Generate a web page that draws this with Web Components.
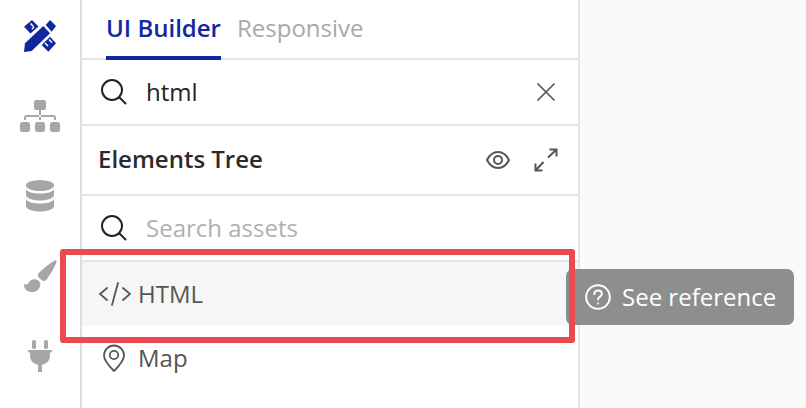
<!DOCTYPE html>
<html>
<head>
<meta charset="utf-8">
<style>
html,body{margin:0;height:100%;overflow:hidden}
body{font-family:"Open Sans",sans-serif;background:#fafafa}
</style>
</head>
<body>
<builder-app>
  <icon-rail slot="rail"></icon-rail>
  <tab-bar slot="panel"></tab-bar>
  <search-row slot="panel" value="html" clearable></search-row>
  <tree-header slot="panel">Elements Tree</tree-header>
  <search-row slot="panel" placeholder="Search assets"></search-row>
  <asset-item slot="panel" icon="code" active>HTML</asset-item>
  <asset-item slot="panel" icon="pin">Map</asset-item>
</builder-app>
<script>
class BuilderApp extends HTMLElement{
    constructor(){
        super()
        this.attachShadow({mode:"open"}).innerHTML = `
        <style>
            :host{display:flex;position:relative;width:806px;height:408px;overflow:hidden}
            .rail{width:80px;flex:none;background:#fff;border-right:2px solid #dedede}
            .panel{width:496px;flex:none;background:#fff;border-right:2px solid #e4e4e4}
            .tip{position:absolute;left:566px;top:269px;width:228px;height:56px;box-sizing:border-box;padding-left:19px;display:flex;align-items:center;gap:11px;background:#8e8e8e;border-radius:7px;color:#fff;font-size:24px;z-index:1}
            .tip span{margin-bottom:2px}
            .mark{position:absolute;left:60px;top:249px;width:515px;height:94px;box-sizing:border-box;border:6px solid #e9494f;border-radius:3px;z-index:2}
            svg{display:block}
        </style>
        <div class="rail"><slot name="rail"></slot></div>
        <div class="panel"><slot name="panel"></slot></div>
        <div class="tip">
            <svg width="26" height="26" viewBox="0 0 26 26" fill="none" stroke="#fff" stroke-width="2" stroke-linecap="round">
                <circle cx="13" cy="13" r="11.800"/>
                <path d="M9.300 10.200c0-2.200 1.700-3.600 3.800-3.600s3.700 1.400 3.700 3.300c0 2.900-3.800 2.900-3.800 5.600"/>
                <path d="M13 19.400v.2"/>
            </svg>
            <span>See reference</span>
        </div>
        <div class="mark"></div>
        `
    }
}

class IconRail extends HTMLElement{
    constructor(){
        super()
        this.attachShadow({mode:"open"}).innerHTML = `
        <style>
            :host{display:block;height:408px;position:relative}
            svg{position:absolute;display:block}
        </style>
        <svg style="left:23px;top:19px" width="34" height="34" viewBox="0 0 34 34">
            <g fill="#12279f">
                <!-- pencil -->
                <path d="M1 33l1-8.700L20.300 7l6.700 7.300L8.700 32z"/>
                <path d="M22.700 6l4.300-5 6 6-4.300 5.700z"/>
                <!-- ruler, two halves under the pencil -->
                <path d="M1 7.700L9 1l6.500 6.500-8 7z"/>
                <path d="M18.700 26L27 17.700l6 6.600-7.700 8.400z"/>
            </g>
            <g stroke="#fff" stroke-width="1.500" fill="none">
                <path d="M7.500 4.500l3 3M11 8l-2 2"/>
                <path d="M22 24l3 3M26 20.500l3 3"/>
            </g>
        </svg>
        <svg style="left:20px;top:100px" width="40" height="32" viewBox="0 0 40 32">
            <g fill="#a6a6a6">
                <rect x="14" y="0" width="12" height="10" rx="2"/>
                <rect x="0" y="22" width="10" height="10" rx="2.500"/>
                <rect x="15" y="22" width="10" height="10" rx="2.500"/>
                <rect x="30" y="22" width="10" height="10" rx="2.500"/>
            </g>
            <path d="M19 10v10h2V10zM4 20v-2a3 3 0 0 1 3-3h26a3 3 0 0 1 3 3v2h-2v-2a1 1 0 0 0-1-1H7a1 1 0 0 0-1 1v2z" fill="#a6a6a6"/>
        </svg>
        <svg style="left:26px;top:180px" width="28" height="32" viewBox="0 0 28 32">
            <g fill="#a6a6a6">
                <ellipse cx="14" cy="5.500" rx="14" ry="5.500"/>
                <path d="M0 9.200C2 12.500 8 13.500 14 13.500s12-1 14-4.300V15c0 3-6.300 5.500-14 5.500S0 18 0 15z"/>
                <path d="M0 19.200C2 22.500 8 23.500 14 23.500s12-1 14-4.300V26c0 3-6.300 5.500-14 5.500S0 29 0 26z"/>
            </g>
        </svg>
        <svg style="left:24px;top:260px" width="33" height="33" viewBox="0 0 33 33">
            <g fill="#a6a6a6">
                <path d="M31 .5c1.200-.5 2 .4 1.500 1.500-2 5.500-6 12-9.500 17-1.500 2-3.500 2.500-5 1.300l-3-2.500c-1.500-1.300-1.500-3.300 0-5C20 8 26 3 31 .5z"/>
                <path d="M8.500 19.500c3-.8 6 .5 7.500 3 1 2.500-.5 6-3 8-3.500 2.500-10 2-12-2-.8-1.500-1.200-3-.8-5 1 1.500 2.500 1.500 3.500.5 1.200-2 2.500-4 4.800-4.500z"/>
            </g>
        </svg>
        <svg style="left:28px;top:340px" width="24" height="32" viewBox="0 0 24 32">
            <g fill="#a6a6a6">
                <rect x="4" y="0" width="4" height="9" rx="1.800"/>
                <rect x="16" y="0" width="4" height="9" rx="1.800"/>
                <path d="M1 10h22a1 1 0 0 1 0 2.500h-1v3c0 5-3.500 8.500-8 9.300V32h-4v-7.200c-4.500-.8-8-4.300-8-9.300v-3H1a1 1 0 0 1 0-2.500z"/>
            </g>
        </svg>
        `
    }
}

class TabBar extends HTMLElement{
    constructor(){
        super()
        this.attachShadow({mode:"open"}).innerHTML = `
        <style>
            :host{display:flex;height:60px;box-sizing:border-box;border-bottom:2px solid #e4e4e4;padding-left:24px;gap:16px;font-size:24px;line-height:56px}
            div{height:60px;box-sizing:border-box;color:#a8a8a8}
            .on{color:#12279f;font-weight:600;border-bottom:4px solid #12279f}
        </style>
        <div class="on">UI Builder</div>
        <div>Responsive</div>
        `
    }
}

class SearchRow extends HTMLElement{
    constructor(){
        super()
        const value = this.getAttribute("value")
        const text = value || this.getAttribute("placeholder")
        const clear = this.hasAttribute("clearable") ? `
            <svg class="x" width="20" height="20" viewBox="0 0 20 20" fill="none" stroke="#555" stroke-width="1.700">
                <path d="M1.500 1.500l17 17M18.500 1.500l-17 17"/>
            </svg>` : ""
        this.attachShadow({mode:"open"}).innerHTML = `
        <style>
            :host{display:flex;align-items:center;height:66px;box-sizing:border-box;border-bottom:2px solid #e4e4e4;padding-left:18px;font-size:24px;color:#222}
            :host(:not([clearable])){color:#b0b0b0}
            span{margin-left:18px;margin-bottom:2px;flex:1}
            svg{display:block;flex:none}
            .x{margin-right:22px}
        </style>
        <svg width="28" height="28" viewBox="0 0 28 28" fill="none" stroke="#222" stroke-width="2" stroke-linecap="round">
            <circle cx="12" cy="12" r="10"/>
            <path d="M19.500 19.500l6 6"/>
        </svg>
        <span>${text}</span>
        ${clear}
        `
    }
}

class TreeHeader extends HTMLElement{
    constructor(){
        super()
        this.attachShadow({mode:"open"}).innerHTML = `
        <style>
            :host{display:flex;align-items:center;height:70px;box-sizing:border-box;border-bottom:2px solid #e4e4e4;padding:0 20px 0 16px;font-size:24px;font-weight:600;color:#2b2b2b}
            .t{flex:1;margin-bottom:4px}
            svg{display:block;flex:none}
            .eye{margin-right:24px}
        </style>
        <div class="t"><slot></slot></div>
        <svg class="eye" width="24" height="20" viewBox="0 0 24 20" fill="none" stroke="#555" stroke-width="2">
            <path d="M1 10c2.500-5 6.500-8 11-8s8.500 3 11 8c-2.500 5-6.500 8-11 8S3.500 15 1 10z"/>
            <circle cx="12" cy="10" r="4"/>
        </svg>
        <svg width="24" height="24" viewBox="0 0 24 24" fill="none" stroke="#555" stroke-width="2">
            <path d="M14 9.500L22.500 1.500M15.500 1.500h7v7M9.500 14L1.500 22.500M1.500 15.500v7h7"/>
        </svg>
        `
    }
}

class AssetItem extends HTMLElement{
    constructor(){
        super()
        const icons = {
            code:`<svg width="32" height="24" viewBox="0 0 32 24" fill="none" stroke="#555" stroke-width="1.800" stroke-linecap="round"><path d="M8 6l-7 6 7 6M24 6l7 6-7 6M19 1l-6 22"/></svg>`,
            pin:`<svg style="margin-left:4px" width="22" height="28" viewBox="1 0 22 28" fill="none" stroke="#555" stroke-width="1.800"><path d="M12 27C6 21 2 16.500 2 11.500a10 10 0 0 1 20 0C22 16.500 18 21 12 27z"/><circle cx="12" cy="11" r="4.200"/></svg>`
        }
        this.attachShadow({mode:"open"}).innerHTML = `
        <style>
            :host{display:flex;align-items:center;height:64px;box-sizing:border-box;padding-left:17px;font-size:24px;color:#555}
            :host([active]){background:#f6f6f6}
            .i{width:39px;flex:none;display:flex}
            .l{margin-bottom:2px}
            svg{display:block}
        </style>
        <div class="i">${icons[this.getAttribute("icon")]}</div>
        <div class="l"><slot></slot></div>
        `
    }
}

customElements.define("builder-app",BuilderApp)
customElements.define("icon-rail",IconRail)
customElements.define("tab-bar",TabBar)
customElements.define("search-row",SearchRow)
customElements.define("tree-header",TreeHeader)
customElements.define("asset-item",AssetItem)
</script>
</body>
</html>
